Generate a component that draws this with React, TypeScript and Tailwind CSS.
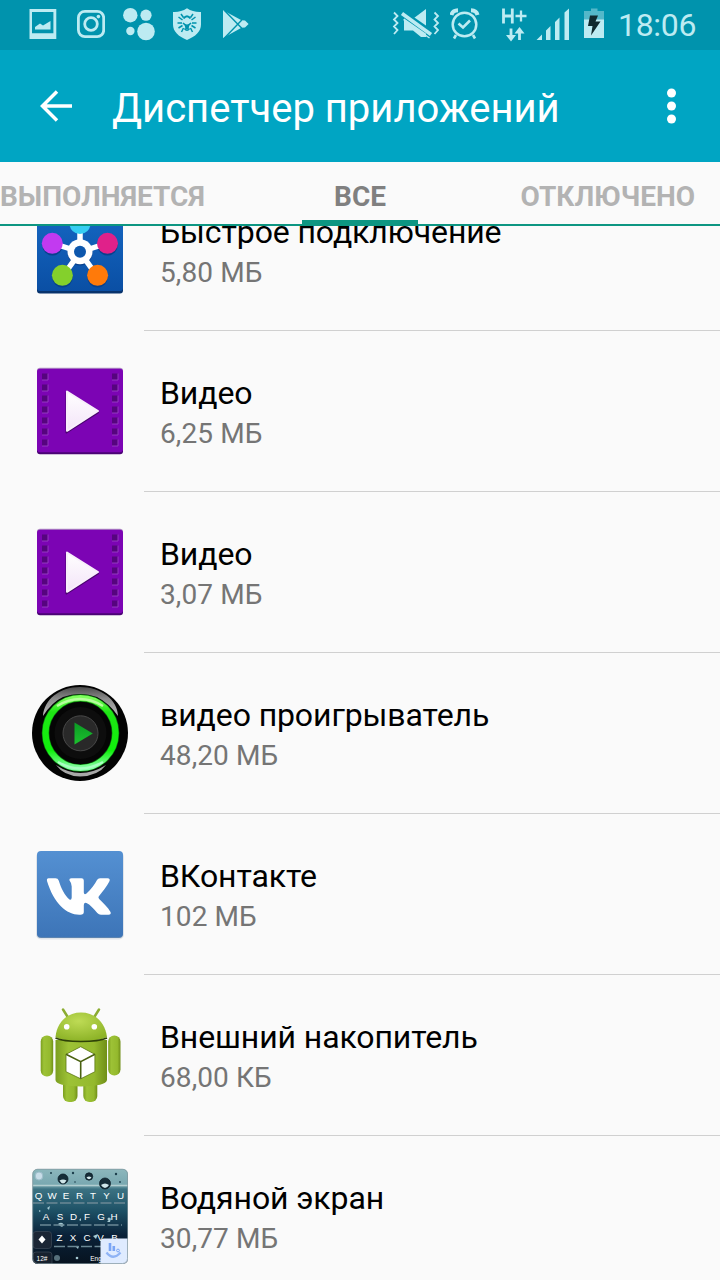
import type { ReactNode } from "react"

interface AppItem {
  id: string;
  title: string;
  size: string;
  icon: ReactNode;
}

const StatusIcons = () => (
  <div className="flex h-[50px] pl-[29px] text-[#bdebf2]">
    {/* Gallery */}
    <svg className="w-7 h-[50px]" viewBox="29 0 28 50" fill="currentColor">
      <path fillRule="evenodd" d="M29.5 9H56.3V39H29.5ZM32 12V33.3H53.4V12Z" />
      <path d="M35 29.5V27L40 23.5L43 25.5L50.5 21V29.5Z" />
    </svg>
    {/* Instagram */}
    <svg className="w-7 h-[50px] ml-5" viewBox="77 0 28 50" fill="none" stroke="currentColor" strokeWidth="2.8">
      <rect x="78.4" y="11.3" width="25.3" height="25.3" rx="6.5" />
      <circle cx="91" cy="24" r="6.3" />
      <circle cx="98.4" cy="16.6" r="1.8" fill="currentColor" stroke="none" />
    </svg>
    {/* Dots */}
    <svg className="w-8 h-[50px] ml-[18px]" viewBox="123 0 32 50" fill="currentColor">
      <circle cx="130.3" cy="15.2" r="7.2" />
      <circle cx="146" cy="15.2" r="5.6" />
      <circle cx="130.4" cy="31" r="4.2" />
      <circle cx="146" cy="31.5" r="8.8" />
    </svg>
    {/* Antivirus shield */}
    <svg className="w-7 h-[50px] ml-[18px]" viewBox="173 0 28 50">
      <path fill="currentColor" d="M187 8.3Q193.5 12.5 201 12V24.5C201 31.5 195.5 36.5 187 40C178.500 36.5 173 31.5 173 24.5V12Q180.5 12.5 187 8.3Z" />
      <g stroke="#0093ad" strokeWidth="1.5" fill="none">
        <path d="M183.500 17.500L181 14M182.500 20L178.500 17M182 23H177.500M182.500 25.500L178.500 28M183.500 28L181.500 32M190.500 17.500L193 14M191.500 20L195.500 17M192 23H196.500M191.500 25.500L195.500 28M190.500 28L192.500 32" />
        <path d="M183.500 18.500Q187 14 190.500 18.500" strokeWidth="2" />
        <path d="M183 23Q187 27.500 191 23M184.500 28.500Q187 32 189.500 28.500" />
      </g>
      <path d="M184.500 24.500Q187 26 189.500 24.500L188.500 29H185.500Z" fill="#0093ad" />
    </svg>
    {/* Play store */}
    <svg className="w-7 h-[50px] ml-[21px]" viewBox="222 0 28 50">
      <path fill="currentColor" d="M223 10.3L241.5 20.2L245 20.5L248.6 24L245 27.5L241.5 27.8L223 38Z" />
      <path d="M224.5 10.5L241.8 28.3M224.5 38L241.8 20" stroke="#0093ad" strokeWidth="1.4" />
    </svg>
  </div>
)

const SystemIcons = () => (
  <div className="flex h-[50px] text-[#bdebf2]">
    {/* Sound off */}
    <svg className="w-12 h-[50px]" viewBox="392 0 48 50">
      <path fill="currentColor" d="M404 18H414L426 9V37H421L413 30.500H404Z" />
      <path d="M400 11.500L433 34.500" stroke="#0093ad" strokeWidth="6.500" />
      <path d="M402 13.500L431 34.500" stroke="currentColor" strokeWidth="3.600" />
      <path d="M403.500 19.500L429.500 38" stroke="currentColor" strokeWidth="1.500" />
      <path fill="none" stroke="currentColor" strokeWidth="1.8" d="M394 12.5L397.500 16L394 19.5L397.500 23L394 26.500L397.500 30L394 34M434.500 12.500L438 16L434.500 19.500L438 23L434.500 26.500L438 30L434.500 34" />
    </svg>
    {/* Alarm */}
    <svg className="w-[30px] h-[50px] ml-2.5" viewBox="450 0 30 50" fill="none" stroke="currentColor">
      <circle cx="464.5" cy="24.5" r="11.8" strokeWidth="2.5" />
      <path strokeWidth="2.6" d="M458.5 23.5L463 27.5L470 20.5M456 35L454 38.5M473 35L475 38.5" />
      <path strokeWidth="4" d="M451.5 15Q452.5 10.5 458 10.3M477.5 15Q476.5 10.5 471 10.3" />
    </svg>
    {/* H+ network */}
    <svg className="w-[26px] h-[50px] ml-[21px]" viewBox="501 0 26 50" fill="none" stroke="currentColor">
      <path strokeWidth="2.8" d="M503.5 8.5V23.5M512.3 8.5V23.5M503.5 16H512.3" />
      <path strokeWidth="2.3" d="M515.5 16H526.5M521 10.5V21.5" />
      <path strokeWidth="2.8" d="M511 28.5V38M519.5 31V40" />
      <path fill="currentColor" stroke="none" d="M506 35H516L511 41.5ZM514.5 33.5H524.5L519.5 27Z" />
    </svg>
    {/* Signal */}
    <svg className="w-[34px] h-[50px] ml-[9px]" viewBox="536 0 34 50" fill="currentColor">
      <path d="M536.5 40L542 34.5V40ZM546 30.5L550.5 26V40H546ZM555 22L559.5 17.5V40H555ZM564.5 12.5L569 8.5V40H564.5Z" />
    </svg>
    {/* Battery */}
    <svg className="w-5 h-[50px] ml-[14px]" viewBox="584 0 20 50">
      <path fill="#54b8c9" d="M591 8.5H597.5V11H604V38H584V11H591Z" />
      <path fill="currentColor" d="M584 19.5H604V38H584Z" />
      <path fill="#10292e" d="M590 15.5H598L595.5 21.5H600.5L591 35.5L592.5 26H588Z" />
    </svg>
    <span className="w-[92px] pl-[14px] text-[32px] leading-[50px] tracking-[-0.3px] whitespace-nowrap">18:06</span>
  </div>
)

const ConnectIcon = () => (
  <svg className="w-24 h-24" viewBox="0 0 96 96">
    <defs>
      <linearGradient id="connect" x1="0" y1="0" x2="0" y2="1">
        <stop offset="0" stopColor="#1668c4" />
        <stop offset="1" stopColor="#0a4fa4" />
      </linearGradient>
    </defs>
    <rect x="5" y="7" width="86" height="84.5" rx="3" fill="#08336c" />
    <rect x="5" y="5" width="86" height="84" rx="3" fill="url(#connect)" />
    <g fill="#08408c">
      <circle cx="20.5" cy="43.3" r="10.3" />
      <circle cx="75.5" cy="43.3" r="10.3" />
      <circle cx="30.5" cy="75.3" r="10.3" />
      <circle cx="65.5" cy="75.3" r="10.3" />
      <circle cx="48" cy="51" r="12.5" />
    </g>
    <path d="M48 50V22M48 50L20 41M48 50L76 41M48 50L31 74M48 50L65 74" stroke="white" strokeWidth="5.5" />
    <circle cx="48" cy="49.7" r="12.5" fill="white" />
    <circle cx="48" cy="49.7" r="6" fill="#0d57ad" />
    <circle cx="48" cy="21.5" r="10.5" fill="#35cdf2" />
    <circle cx="20.3" cy="41.3" r="10.5" fill="#c23af0" />
    <circle cx="75.5" cy="41.3" r="10.5" fill="#e0218a" />
    <circle cx="30.4" cy="73.3" r="10.5" fill="#84d02c" />
    <circle cx="65.6" cy="73.3" r="10.5" fill="#ff7a0a" />
  </svg>
)

const VideoIcon = () => (
  <svg className="w-24 h-24" viewBox="0 0 96 96">
    <defs>
      <linearGradient id="play" x1="0" y1="0" x2="0" y2="1">
        <stop offset="0" stopColor="#ffffff" />
        <stop offset="1" stopColor="#f3e4f8" />
      </linearGradient>
    </defs>
    <rect x="5" y="7" width="86" height="84.3" rx="3" fill="#4a0374" />
    <rect x="5" y="4.8" width="86" height="10" rx="3" fill="#b190c4" />
    <rect x="5" y="5.8" width="86" height="83.5" rx="3" fill="#7c04b4" />
    {[10.5, 21.5, 32.5, 43.5, 54.5, 65.5, 76.5].map((y) => (
      <g key={y}>
        <path d={`M10 ${y}h6v6.5h-6zM80 ${y}h6v6.5h-6z`} fill="#56047f" />
        <path d={`M10 ${y + 6.5}h6v-6.5M80 ${y + 6.5}h6v-6.5`} fill="none" stroke="#9a40c6" strokeWidth="0.9" />
      </g>
    ))}
    <path d="M34.5 30L66 49.5L34.5 69.500Z" fill="#4b046f" stroke="#4b046f" strokeWidth="2" strokeLinejoin="round" />
    <path d="M35 28.5L66 48L35 67.8Z" fill="url(#play)" stroke="#f8effb" strokeWidth="2" strokeLinejoin="round" />
  </svg>
)

const PlayerIcon = () => (
  <svg className="w-24 h-24" viewBox="0 0 96 96">
    <defs>
      <linearGradient id="shine" x1="0" y1="0" x2="0" y2="1">
        <stop offset="0" stopColor="#4c4c4c" />
        <stop offset="0.4" stopColor="#8a8a8a" />
        <stop offset="1" stopColor="#bdbdbd" />
      </linearGradient>
      <linearGradient id="ring" x1="0" y1="0" x2="0" y2="1">
        <stop offset="0" stopColor="#7dff5c" />
        <stop offset="0.2" stopColor="#1ee614" />
        <stop offset="0.75" stopColor="#10f00c" />
        <stop offset="1" stopColor="#8affa8" />
      </linearGradient>
      <linearGradient id="arrow" x1="0" y1="0" x2="0" y2="1">
        <stop offset="0" stopColor="#0b9a24" />
        <stop offset="1" stopColor="#1cc22e" />
      </linearGradient>
    </defs>
    <circle cx="48" cy="48" r="48" fill="#030303" />
    <path d="M11 31C12 15 27 2 48 2S86 15 86 31Q77 18 65 12Q48 6 31 12Q20 17 11 31Z" fill="url(#shine)" />
    <path d="M24 80Q48 96 74 80Q66 91 48 91.5Q32 91 24 80Z" fill="#a8a8a8" />
    <circle cx="48.5" cy="48" r="35" fill="#050505" stroke="#087c0b" strokeWidth="7.5" />
    <circle cx="48.5" cy="48" r="35" fill="none" stroke="url(#ring)" strokeWidth="6.2" />
    <path d="M25 21Q48 7 71 21" fill="none" stroke="#b5ff9d" strokeWidth="2.5" />
    <path d="M26 77Q48 90 71 77" fill="none" stroke="#aaffc2" strokeWidth="2.5" />
    <circle cx="48.5" cy="48" r="26" fill="#0d0d0d" />
    <circle cx="48.5" cy="48.3" r="17.5" fill="#292929" stroke="#484848" strokeWidth="1" />
    <path d="M42.5 37.5L60.8 48.5L42.5 59.5Z" fill="url(#arrow)" />
  </svg>
)

const VkIcon = () => (
  <svg className="w-24 h-24" viewBox="0 0 96 96">
    <defs>
      <linearGradient id="vk" x1="0" y1="0" x2="0" y2="1">
        <stop offset="0" stopColor="#5490d2" />
        <stop offset="1" stopColor="#3d75b8" />
      </linearGradient>
    </defs>
    <rect x="4" y="6" width="88" height="87.5" rx="5" fill="#dfe4ea" />
    <rect x="5" y="7" width="86" height="85" rx="4" fill="#5c84b0" />
    <rect x="5" y="5" width="86" height="86" rx="4" fill="url(#vk)" />
    <path
      d="M16.5 32.3H23.5Q26 32.3 26.7 34.5C29 42 33 50 37.5 53.5Q39.5 54.5 39.7 51.5V40.5Q39.7 37 37.5 34.5Q37 32.3 39.5 32.3H49.5Q51.8 32.3 51.8 34.5V46.5Q52.2 49.5 54.5 47.5C59 43.5 63 38 65 34Q66 32.3 68 32.3H75.5Q78.8 32.5 77.3 35.5C75 40.5 70 46 66.7 50.5Q66 51.7 67.2 53C71 56.5 76 61.5 78.500 66Q79.5 68.5 76.5 68.7H69Q66.8 68.7 65.3 67C61.5 62.5 58 58.5 54.5 57Q52 56.3 51.8 59V66Q51.8 68.7 48.5 68.7C35.5 69.5 22 58 15 35Q14.5 32.3 16.5 32.3Z"
      fill="white"
    />
  </svg>
)

const AndroidIcon = () => (
  <svg className="w-24 h-24" viewBox="0 0 96 96">
    <defs>
      <linearGradient id="droid" x1="0" y1="0" x2="1" y2="0">
        <stop offset="0" stopColor="#7b9e1f" />
        <stop offset="0.25" stopColor="#9dc236" />
        <stop offset="0.75" stopColor="#94b92d" />
        <stop offset="1" stopColor="#708f18" />
      </linearGradient>
      <radialGradient id="head" cx="0.45" cy="0.3" r="0.7">
        <stop offset="0" stopColor="#bedb55" />
        <stop offset="1" stopColor="#8eb428" />
      </radialGradient>
    </defs>
    <path d="M31 2.5L36 10.5M67 2.5L62 10.5" stroke="#8bac31" strokeWidth="2.5" strokeLinecap="round" />
    <rect x="31" y="66" width="14.5" height="29" rx="6" fill="url(#droid)" />
    <rect x="51.3" y="66" width="14" height="29" rx="6" fill="url(#droid)" />
    <rect x="8.7" y="28.5" width="12.5" height="41" rx="6" fill="url(#droid)" />
    <rect x="76.2" y="28.5" width="12.3" height="40" rx="6" fill="url(#droid)" />
    <path d="M23.5 33H75V73Q74 79 49 79.5Q24 79 23.5 73Z" fill="url(#droid)" />
    <path d="M23.5 30C25 15 35 5.5 49 5.5S73 15 75 30Q68 34 49 34T23.5 30Z" fill="url(#head)" />
    <path d="M23.5 31Q31 34.5 49 34.5T75 31" fill="none" stroke="#2e4207" strokeWidth="1.5" />
    <circle cx="34.7" cy="19.7" r="2.8" fill="white" />
    <circle cx="62.3" cy="19.7" r="2.8" fill="white" />
    <path d="M48.700 39.7L62.9 47.3V64.7L48.7 71.8L34 64.7V47.3Z" fill="white" stroke="#5b7612" strokeWidth="0.8" />
    <path d="M34 47.3L48.7 54.7L62.9 47.3M48.7 54.7V71.8" fill="none" stroke="#4a6110" strokeWidth="1.6" />
  </svg>
)

const keys = [
  { y: 31, letters: "QWERTYU", x: [6.5, 20, 34, 47.5, 61, 74.5, 88.5] },
  { y: 52, letters: "ASDFGH", x: [14, 28, 41.5, 55, 69, 82] },
  { y: 73, letters: "ZXCVB", x: [27.5, 41, 55, 68.5, 82.5] },
]

const KeyboardIcon = () => (
  <svg className="w-24 h-24" viewBox="0 0 96 96">
    <defs>
      <linearGradient id="water" x1="0" y1="0" x2="0" y2="1">
        <stop offset="0" stopColor="#8db8bd" />
        <stop offset="0.18" stopColor="#78a7b0" />
        <stop offset="0.22" stopColor="#3b7282" />
        <stop offset="0.45" stopColor="#1d5065" />
        <stop offset="0.7" stopColor="#0a2138" />
        <stop offset="1" stopColor="#07131f" />
      </linearGradient>
      <clipPath id="tile">
        <rect x="0.5" y="1" width="95.500" height="95" rx="5" />
      </clipPath>
    </defs>
    <g clipPath="url(#tile)">
      <rect width="96" height="96" fill="url(#water)" />
      <path d="M0 17.5H96" stroke="#b2cdd0" strokeWidth="1.5" />
      <ellipse cx="7" cy="8" rx="3.8" ry="4" fill="#c8dde8" stroke="#9dbdca" />
      {/* Drops */}
      <g fill="#162d38" stroke="#0d2029" strokeWidth="0.8">
        <circle cx="31" cy="11" r="5" />
        <circle cx="57" cy="8.5" r="3.7" />
        <circle cx="73" cy="15.5" r="5.5" />
      </g>
      <path d="M27.5 12.5Q31 10.5 34.5 12.5Q31 18.5 27.5 12.5ZM54.5 9.5Q57 7.5 59.5 9.5Q57 13 54.5 9.5ZM69 17Q73 14 77 17Q73 23 69 17Z" fill="#d0e6e9" />
      <g fill="#1c3f4c">
        <circle cx="19" cy="5" r="1" />
        <circle cx="41" cy="5" r="1.2" />
        <circle cx="84" cy="6" r="1.2" />
        <circle cx="43" cy="14" r="0.8" />
        <circle cx="88" cy="14" r="0.9" />
      </g>
      <g fill="#a5c9d2">
        <path d="M15 40L18 38L17 42ZM26 56Q30 53 32 57Q30 61 26 56ZM75 54L79 50L78 54ZM47 52L49 50L49 53ZM12 73L18 69L19 73L14 77ZM61 68L66 66L64 71ZM44 79L47 78L46 81ZM7 42L9 43L7 44Z" />
        <circle cx="77" cy="51" r="1.5" />
        <circle cx="45" cy="90" r="1.3" />
        <circle cx="25" cy="90" r="3" opacity="0.5" />
      </g>
      <path d="M1 35H95M8 57H90M22 78.5H86" stroke="#6b8895" strokeWidth="1.6" strokeDasharray="11 2.5" />
      <rect x="1" y="63.5" width="18.5" height="17" rx="3" fill="#1b2635" stroke="#3d4a59" strokeWidth="0.7" />
      <path d="M10 67.5L13.5 71.5L10 75.5L6.5 71.5Z" fill="white" />
      <rect x="1" y="84" width="19" height="14" rx="3" fill="#17212e" stroke="#3d4a59" strokeWidth="0.7" />
      <g fill="white" fontFamily="Liberation Sans, sans-serif" textAnchor="middle">
        {keys.map((row) =>
          row.x.map((x, i) => (
            <text key={x} x={x} y={row.y} fontSize="9.8">{row.letters[i]}</text>
          ))
        )}
        <text x="10" y="93" fontSize="6.5">12#</text>
        <text x="64" y="93" fontSize="6.5">Eng</text>
      </g>
      <path d="M68.5 96V74Q68.5 70.5 72 70.5H96V96Z" fill="#dfebff" />
      <path d="M78 75V83M81.8 78V83" stroke="#7aa5f5" strokeWidth="2.6" />
      <circle cx="86" cy="82.5" r="1.4" fill="none" stroke="#7aa5f5" />
      <path d="M74.5 84.5Q81 93 88.5 84.5" fill="none" stroke="#8fb3f5" strokeWidth="2.3" />
    </g>
    <rect x="0.7" y="1.2" width="94.8" height="94.3" rx="5" fill="none" stroke="#81959c" strokeWidth="0.7" />
  </svg>
)

const apps: AppItem[] = [
  { id: "connect", title: "Быстрое подключение", size: "5,80 МБ", icon: <ConnectIcon /> },
  { id: "video", title: "Видео", size: "6,25 МБ", icon: <VideoIcon /> },
  { id: "video-2", title: "Видео", size: "3,07 МБ", icon: <VideoIcon /> },
  { id: "player", title: "видео проигрыватель", size: "48,20 МБ", icon: <PlayerIcon /> },
  { id: "vk", title: "ВКонтакте", size: "102 МБ", icon: <VkIcon /> },
  { id: "storage", title: "Внешний накопитель", size: "68,00 КБ", icon: <AndroidIcon /> },
  { id: "keyboard", title: "Водяной экран", size: "30,77 МБ", icon: <KeyboardIcon /> },
]

const AppRow = ({ title, size, icon }: AppItem) => (
  <div className="flex h-[161px] shrink-0 pl-8">
    <div className="w-28 pt-8 shrink-0">{icon}</div>
    <div className="flex flex-col flex-1 pl-4 pt-[42px] border-b border-[#d0d0d0] whitespace-nowrap">
      <p className="text-[32px] leading-10 tracking-[-0.1px] text-black">{title}</p>
      <p className="text-[28px] leading-[42px] tracking-[0.1px] text-[#757575]">{size}</p>
    </div>
  </div>
)

export default function App() {
  return (
    <div className="flex flex-col w-[720px] h-[1280px] overflow-hidden bg-[#fafafa] font-[Roboto,sans-serif]">
      {/* Status bar */}
      <div className="flex justify-between h-[50px] shrink-0 pr-6 bg-[#0093ad]">
        <StatusIcons />
        <SystemIcons />
      </div>

      {/* Header */}
      <header className="flex items-center h-28 shrink-0 pl-10 bg-[#00a5c3] text-white">
        <svg className="w-8 h-8" viewBox="0 0 32 32" fill="none" stroke="white" strokeWidth="3.5">
          <path d="M17 1.5L2.5 16L17 30.5M2.5 16H32" />
        </svg>
        <h1 className="ml-10 w-[546px] text-[40px] leading-none pt-1.5 whitespace-nowrap">Диспетчер приложений</h1>
        <svg className="w-7 h-10" viewBox="0 0 28 40" fill="white">
          <circle cx="13.5" cy="7" r="4.5" />
          <circle cx="13.5" cy="20" r="4.5" />
          <circle cx="13.5" cy="33" r="4.5" />
        </svg>
      </header>

      {/* Tabs */}
      <nav className="flex h-16 shrink-0 border-b-2 border-[#0d9682] text-[28px] font-bold leading-[70px] text-[#b3b3b3] whitespace-nowrap">
        <div className="w-[302px]">ВЫПОЛНЯЕТСЯ</div>
        <div className="w-[116px] h-[62px] text-center text-[#808080] border-b-4 border-[#0d9682]">ВСЕ</div>
        <div className="flex-1 text-right pr-[25px]">ОТКЛЮЧЕНО</div>
      </nav>

      {/* App list, scrolled part of the way through the first row */}
      <main className="flex-1 min-h-0 overflow-hidden">
        <div className="flex flex-col -mt-14">
          {apps.map((app) => (
            <AppRow key={app.id} {...app} />
          ))}
        </div>
      </main>
    </div>
  )
}
